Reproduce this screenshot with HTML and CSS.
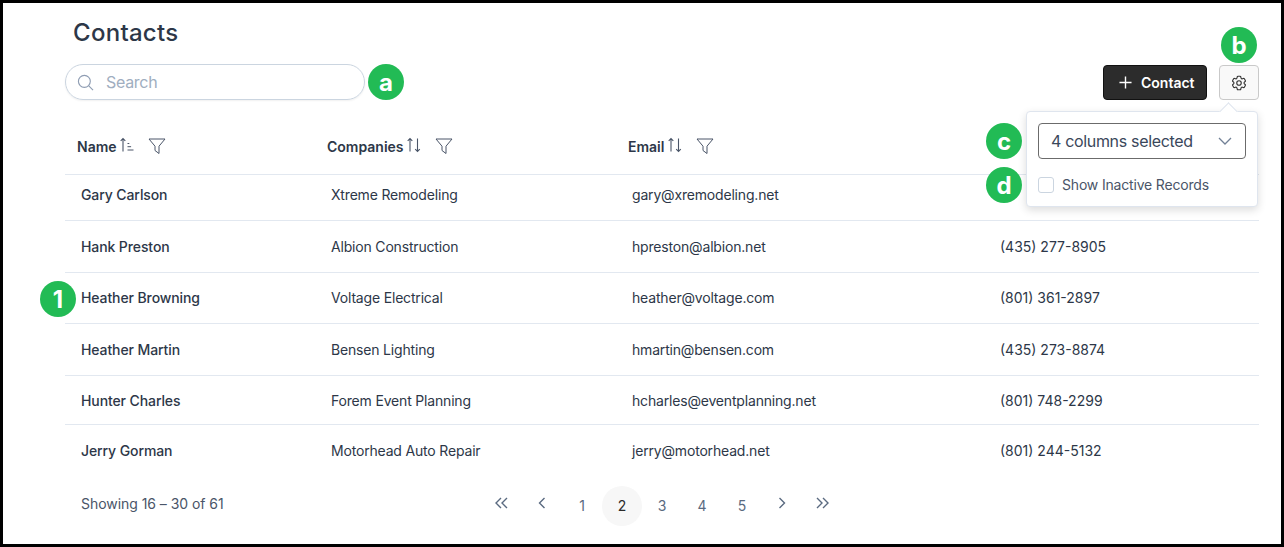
FILE: index.html
```html
<!DOCTYPE html>
<html lang="en">
<head>
<meta charset="utf-8">
<title>Contacts</title>
<link rel="stylesheet" href="styles.css">
</head>
<body>
<svg class="defs" width="0" height="0" aria-hidden="true">
  <symbol id="funnel" viewBox="0 0 18 17"><path d="M1 1h16l-6 7.2v7.3l-4-3V8.2z" fill="none" stroke="currentColor" stroke-width="1" stroke-linejoin="round"/></symbol>
  <symbol id="sort" viewBox="0 0 16 16"><path d="M4 14.5V1.5M1.7 3.8 4 1.5l2.3 2.3M11.5 1.5v13M9.2 12.2l2.3 2.3 2.3-2.3" fill="none" stroke="currentColor" stroke-width="1.1"/></symbol>
</svg>
<div class="frame">
  <h1 class="title">Contacts</h1>
  <div class="toolbar">
    <label class="search">
      <svg class="search-icon" viewBox="0 0 18 18"><circle cx="7.8" cy="7.8" r="6.3" fill="none" stroke="currentColor" stroke-width="1.2"/><path d="m12.500 12.500 4.500 4.500" stroke="currentColor" stroke-width="1.2"/></svg>
      <input class="search-input" type="text" placeholder="Search">
    </label>
    <div class="actions">
      <button class="btn-primary"><svg class="plus" viewBox="0 0 14 14"><path d="M7 .5v13M.5 7h13" stroke="currentColor" stroke-width="1.5"/></svg>Contact</button>
      <button class="btn-gear"><svg class="gear" viewBox="0 0 24 24" fill="none" stroke="currentColor" stroke-width="1.5"><path d="M9.594 3.94c.09-.542.56-.94 1.11-.94h2.593c.55 0 1.02.398 1.11.94l.213 1.281c.063.374.313.686.645.87.074.04.147.083.22.127.325.196.72.257 1.075.124l1.217-.456a1.125 1.125 0 0 1 1.37.49l1.296 2.247a1.125 1.125 0 0 1-.26 1.431l-1.003.827c-.293.241-.438.613-.43.992a7.723 7.723 0 0 1 0 .255c-.008.378.137.75.43.991l1.004.827c.424.35.534.955.26 1.43l-1.298 2.247a1.125 1.125 0 0 1-1.369.491l-1.217-.456c-.355-.133-.75-.072-1.076.124a6.47 6.47 0 0 1-.22.128c-.331.183-.581.495-.644.869l-.213 1.281c-.09.543-.56.94-1.11.94h-2.594c-.55 0-1.019-.398-1.11-.94l-.213-1.281c-.062-.374-.312-.686-.644-.87a6.52 6.52 0 0 1-.22-.127c-.325-.196-.72-.257-1.076-.124l-1.217.456a1.125 1.125 0 0 1-1.369-.49l-1.297-2.247a1.125 1.125 0 0 1 .26-1.431l1.004-.827c.292-.24.437-.613.43-.991a6.932 6.932 0 0 1 0-.255c.007-.38-.138-.751-.43-.992l-1.004-.827a1.125 1.125 0 0 1-.26-1.43l1.297-2.247a1.125 1.125 0 0 1 1.37-.491l1.216.456c.356.133.751.072 1.076-.124.072-.044.146-.086.22-.128.332-.183.582-.495.644-.869l.214-1.28Z"/><path d="M15 12a3 3 0 1 1-6 0 3 3 0 0 1 6 0Z"/></svg></button>
    </div>
  </div>

  <div class="table">
    <div class="row head">
      <div class="th"><span>Name</span><svg class="sort" viewBox="0 0 16 16"><path d="M4 14.500V1.500M1.700 3.800 4 1.500l2.300 2.300" fill="none" stroke="currentColor" stroke-width="1.1"/><path d="M8.500 6.500h1.800M8.500 9.700h3.600M8.500 13h6" stroke="currentColor" stroke-width="1"/></svg><svg class="funnel"><use href="#funnel"/></svg></div>
      <div class="th"><span>Companies</span><svg class="sort"><use href="#sort"/></svg><svg class="funnel"><use href="#funnel"/></svg></div>
      <div class="th"><span>Email</span><svg class="sort"><use href="#sort"/></svg><svg class="funnel"><use href="#funnel"/></svg></div>
      <div class="th"></div>
    </div>
    <div class="row r1"><div class="name">Gary Carlson</div><div>Xtreme Remodeling</div><div>gary@xremodeling.net</div><div class="tel"></div></div>
    <div class="row r2"><div class="name">Hank Preston</div><div>Albion Construction</div><div>hpreston@albion.net</div><div class="tel">(435) 277-8905</div></div>
    <div class="row r3"><div class="name">Heather Browning</div><div>Voltage Electrical</div><div>heather@voltage.com</div><div class="tel">(801) 361-2897</div></div>
    <div class="row r4"><div class="name">Heather Martin</div><div>Bensen Lighting</div><div>hmartin@bensen.com</div><div class="tel">(435) 273-8874</div></div>
    <div class="row r5"><div class="name">Hunter Charles</div><div>Forem Event Planning</div><div>hcharles@eventplanning.net</div><div class="tel">(801) 748-2299</div></div>
    <div class="row r6"><div class="name">Jerry Gorman</div><div>Motorhead Auto Repair</div><div>jerry@motorhead.net</div><div class="tel">(801) 244-5132</div></div>
    <div class="footer">
      <div class="showing">Showing 16 – 30 of 61</div>
      <nav class="pager">
        <span class="pg pg-icon"><svg viewBox="0 0 16 12"><path d="M7 1 2 6l5 5M13 1 8 6l5 5" fill="none" stroke="currentColor" stroke-width="1.4"/></svg></span>
        <span class="pg pg-icon"><svg viewBox="0 0 16 12"><path d="M10.500 1 5.500 6l5 5" fill="none" stroke="currentColor" stroke-width="1.4"/></svg></span>
        <span class="pg">1</span>
        <span class="pg current">2</span>
        <span class="pg">3</span>
        <span class="pg">4</span>
        <span class="pg">5</span>
        <span class="pg pg-icon"><svg viewBox="0 0 16 12"><path d="m5.500 1 5 5-5 5" fill="none" stroke="currentColor" stroke-width="1.4"/></svg></span>
        <span class="pg pg-icon"><svg viewBox="0 0 16 12"><path d="m3 1 5 5-5 5M9 1l5 5-5 5" fill="none" stroke="currentColor" stroke-width="1.4"/></svg></span>
      </nav>
    </div>
  </div>

  <div class="popover">
    <div class="select"><span>4 columns selected</span><svg class="chev" viewBox="0 0 14 8"><path d="m1 1 6 6 6-6" fill="none" stroke="currentColor" stroke-width="1.3"/></svg></div>
    <label class="check"><span class="box"></span>Show Inactive Records</label>
  </div>

  <span class="badge badge-a">a</span>
  <span class="badge badge-b">b</span>
  <span class="badge badge-c">c</span>
  <span class="badge badge-d">d</span>
  <span class="badge badge-1">1</span>
</div>
</body>
</html>
```
FILE: styles.css
```css
* { box-sizing: border-box; }
html, body { margin: 0; padding: 0; }
body { font-family: Inter, "Liberation Sans", sans-serif; color: #2d3748; background: #fff; }
.defs { position: absolute; }
.frame {
  position: relative;
  width: 1284px;
  height: 547px;
  border: 3px solid #000;
  padding: 0 22px 0 62px;
  overflow: hidden;
  background: #fff;
}
.title {
  margin: 0;
  padding: 15px 0 0 8px;
  height: 61px;
  font-size: 24px;
  line-height: 29px;
  font-weight: 500;
  letter-spacing: .28px;
  color: #2d3748;
}
.toolbar { display: flex; justify-content: space-between; align-items: flex-start; height: 63px; }
.search {
  display: flex;
  align-items: center;
  width: 300px;
  height: 36px;
  padding: 0 0 0 11px;
  border: 1px solid #cbd5e0;
  border-radius: 18px;
  box-shadow: 0 1px 2px rgba(0,0,0,.06);
  color: #8f9db3;
}
.search-icon { width: 17px; height: 17px; flex: none; }
.search-input {
  border: 0;
  outline: 0;
  margin-left: 12px;
  width: 230px;
  font: 16px Inter, sans-serif;
  letter-spacing: -.3px;
  color: #2d3748;
  background: transparent;
  padding: 0;
}
.search-input::placeholder { color: #a0aec0; opacity: 1; }
.actions { display: flex; gap: 12px; padding-top: 1px; }
.btn-primary {
  display: flex;
  align-items: center;
  width: 104px;
  height: 35px;
  padding: 0 0 0 15px;
  border: 1px solid #111;
  border-radius: 4px;
  background: #2c2c2c;
  color: #fff;
  font: 600 14px Inter, sans-serif;
}
.plus { width: 13px; height: 13px; margin-right: 9px; }
.btn-gear {
  display: flex;
  align-items: center;
  justify-content: center;
  width: 40px;
  height: 35px;
  padding: 0;
  border: 1px solid #c9c9c9;
  border-radius: 4px;
  background: #f9f9f9;
  color: #333;
}
.gear { width: 18px; height: 18px; }
.table { width: 1194px; font-size: 14px; letter-spacing: -.18px; color: #2d3748; }
.row {
  display: grid;
  grid-template-columns: 250px 301px 368px 275px;
  align-items: center;
  border-bottom: 1px solid #e2e8f0;
}
.row > div { padding-left: 16px; }
.head { height: 48px; }
.head .th { display: flex; align-items: center; padding-left: 12px; padding-bottom: 8px; font-weight: 600; height: 100%; letter-spacing: 0; }
.sort { width: 16px; height: 16px; margin-left: 2.5px; margin-top: -3px; color: #4a5568; }
.funnel { width: 18px; height: 17px; margin-left: 13px; color: #4a5568; }
.name { font-weight: 500; letter-spacing: -.1px; }
.tel { letter-spacing: 0; }
.r1 { height: 46px; padding-bottom: 7px; }
.r2 { height: 52px; }
.r3 { height: 51px; padding-bottom: 2px; }
.r4 { height: 52px; }
.r5 { height: 49px; }
.r6 { height: 52px; padding-bottom: 2px; border-bottom: 0; }
.footer { display: flex; align-items: center; height: 50px; }
.showing { width: 417px; padding: 2px 0 0 16px; letter-spacing: -.05px; color: #4a5568; }
.pager { display: flex; margin-top: 8px; letter-spacing: 0; color: #5a6a80; }
.pg {
  display: flex;
  align-items: center;
  justify-content: center;
  width: 40px;
  height: 40px;
  border-radius: 50%;
  font-size: 14px;
  padding-bottom: 2px;
}
.pg-icon { padding: 0 0 6px; }
.pg-icon svg { width: 16px; height: 12px; }
.current { background: #f7f7f7; color: #2a2a2a; }
.popover {
  position: absolute;
  left: 1023px;
  top: 108px;
  width: 232px;
  height: 96px;
  padding: 11px;
  background: #fff;
  border: 1px solid #dfe5ee;
  border-radius: 4px;
  box-shadow: 0 3px 8px rgba(0,0,0,.14);
}
.popover::before {
  content: "";
  position: absolute;
  right: 22.5px;
  top: -7px;
  width: 12px;
  height: 12px;
  background: #fff;
  border: solid #dfe5ee;
  border-width: 1px 0 0 1px;
  transform: rotate(45deg);
}
.select {
  display: flex;
  align-items: center;
  justify-content: space-between;
  width: 208px;
  height: 36px;
  padding: 0 13px 0 12px;
  border: 1px solid #6b6b6b;
  border-radius: 4px;
  font-size: 16px;
  letter-spacing: -.33px;
  color: #3a475a;
}
.chev { width: 14px; height: 8px; color: #718096; }
.check {
  display: flex;
  align-items: center;
  margin-top: 17px;
  font-size: 14px;
  letter-spacing: -.18px;
  color: #4a5568;
}
.box {
  width: 16px;
  height: 16px;
  margin-right: 8px;
  border: 1px solid #cbd5e0;
  border-radius: 3px;
}
.badge {
  position: absolute;
  width: 36px;
  height: 36px;
  border-radius: 50%;
  background: #22bb55;
  color: #fff;
  font: 700 24px/37px Inter, "Liberation Sans", sans-serif;
  text-align: center;
}
.badge-a { left: 365px; top: 61px; }
.badge-b { left: 1218px; top: 24px; }
.badge-c { left: 983px; top: 120px; }
.badge-d { left: 983px; top: 164px; }
.badge-1 { left: 37px; top: 278px; }
```
